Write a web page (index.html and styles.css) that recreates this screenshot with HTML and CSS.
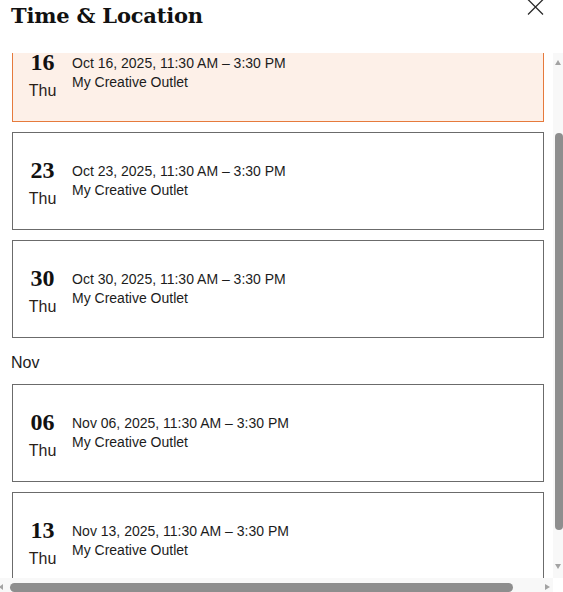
FILE: index.html
```html
<!DOCTYPE html>
<html lang="en">
<head>
<meta charset="utf-8">
<title>Time &amp; Location</title>
<link rel="stylesheet" href="styles.css">
</head>
<body>
<div class="dialog">
  <header class="head">
    <h2 class="title">Time &amp; Location</h2>
    <button class="close" aria-label="Close">
      <svg width="17" height="16" viewBox="0 0 17 16"><path d="M1 0.5 L16 15.5 M16 0.5 L1 15.5" stroke="#2b2b2b" stroke-width="1.3" fill="none"/></svg>
    </button>
  </header>
  <div class="frame">
    <div class="viewport">
      <div class="list">
        <div class="card card-active">
          <div class="date"><span class="num">16</span><span class="dow">Thu</span></div>
          <div class="info"><div>Oct 16, 2025, 11:30 AM – 3:30 PM</div><div>My Creative Outlet</div></div>
        </div>
        <div class="card">
          <div class="date"><span class="num">23</span><span class="dow">Thu</span></div>
          <div class="info"><div>Oct 23, 2025, 11:30 AM – 3:30 PM</div><div>My Creative Outlet</div></div>
        </div>
        <div class="card">
          <div class="date"><span class="num">30</span><span class="dow">Thu</span></div>
          <div class="info"><div>Oct 30, 2025, 11:30 AM – 3:30 PM</div><div>My Creative Outlet</div></div>
        </div>
        <div class="month">Nov</div>
        <div class="card">
          <div class="date"><span class="num">06</span><span class="dow">Thu</span></div>
          <div class="info"><div>Nov 06, 2025, 11:30 AM – 3:30 PM</div><div>My Creative Outlet</div></div>
        </div>
        <div class="card">
          <div class="date"><span class="num">13</span><span class="dow">Thu</span></div>
          <div class="info"><div>Nov 13, 2025, 11:30 AM – 3:30 PM</div><div>My Creative Outlet</div></div>
        </div>
      </div>
    </div>
    <div class="vbar">
      <div class="vbtn"><span class="arrow-up"></span></div>
      <div class="vtrack"><div class="vthumb"></div></div>
      <div class="vbtn"><span class="arrow-down"></span></div>
    </div>
  </div>
  <div class="hbar">
    <div class="hbtn hbtn-left"><span class="arrow-left"></span></div>
    <div class="htrack"><div class="hthumb"></div></div>
    <div class="hbtn"><span class="arrow-right"></span></div>
    <div class="corner"></div>
  </div>
</div>
</body>
</html>
```

FILE: styles.css
```css
* { box-sizing: border-box; }
html, body { margin: 0; padding: 0; background: #fff; }
body { width: 563px; height: 592px; overflow: hidden; font-family: "Liberation Sans", Arial, sans-serif; color: #1a1a1a; }

.dialog { display: flex; flex-direction: column; width: 563px; height: 592px; }

.head { display: flex; justify-content: space-between; align-items: flex-start; height: 53px; padding: 0 19px 0 11px; }
.title { margin: 0; font-family: "DejaVu Serif", serif; font-weight: bold; font-size: 21px; line-height: 32px; color: #111; letter-spacing: -0.2px; }
.close { border: 0; background: none; padding: 0; margin: -1px 0 0 0; width: 17px; height: 16px; display: block; }
.close svg { display: block; }

.frame { display: flex; height: 525px; }
.viewport { width: 553px; height: 525px; overflow: hidden; }
.list { display: flex; flex-direction: column; margin-top: -29px; padding: 0 9px 0 12px; }

.card { height: 98px; border: 1px solid #6b6b6b; background: #fff; display: flex; align-items: center; padding: 2px 0 0 14px; margin-bottom: 10px; }
.card-active { background: #fdf0e8; border-color: #e67a3c; }

.date { width: 31px; display: flex; flex-direction: column; align-items: center; }
.num { font-family: "Liberation Serif", serif; font-weight: bold; font-size: 24px; line-height: 32px; color: #111; }
.dow { font-size: 16px; line-height: 22px; color: #2a2118; margin-top: 2px; }
.info { margin-left: 14px; padding-top: 8px; align-self: center; font-size: 14px; line-height: 19px; color: #1c1c1c; margin-bottom: 10px; }

.month { font-size: 16px; line-height: 22px; color: #1c1c1c; margin: 4px 0 10px -1px; }

.vbar { width: 10px; height: 525px; background: #f8f8f8; display: flex; flex-direction: column; }
.vbtn { height: 20px; display: flex; align-items: center; justify-content: center; }
.vtrack { flex: 1; padding-top: 60px; display: flex; justify-content: flex-end; }
.vthumb { width: 8px; height: 397px; background: #8e8e8e; border-radius: 4px; }
.arrow-up { width: 0; height: 0; border-left: 3.5px solid transparent; border-right: 3.5px solid transparent; border-bottom: 5px solid #a3a3a3; margin-top: -1px; }
.arrow-down { width: 0; height: 0; border-left: 3.5px solid transparent; border-right: 3.5px solid transparent; border-top: 5px solid #a3a3a3; margin-top: -4px; }

.hbar { height: 14px; display: flex; background: #f8f8f8; }
.hbtn { width: 20px; display: flex; align-items: center; justify-content: center; padding-top: 3px; }
.hbtn-left { width: 10px; justify-content: flex-start; }
.htrack { flex: 1; padding-top: 5px; }
.hthumb { width: 503px; height: 9px; background: #8e8e8e; border-radius: 4.5px; }
.arrow-left { width: 0; height: 0; border-top: 3.5px solid transparent; border-bottom: 3.5px solid transparent; border-right: 4px solid #a3a3a3; margin-left: -1px; }
.arrow-right { width: 0; height: 0; border-top: 3.5px solid transparent; border-bottom: 3.5px solid transparent; border-left: 5px solid #a3a3a3; margin-left: 8px; }
.corner { width: 10px; background: #fff; }
```
